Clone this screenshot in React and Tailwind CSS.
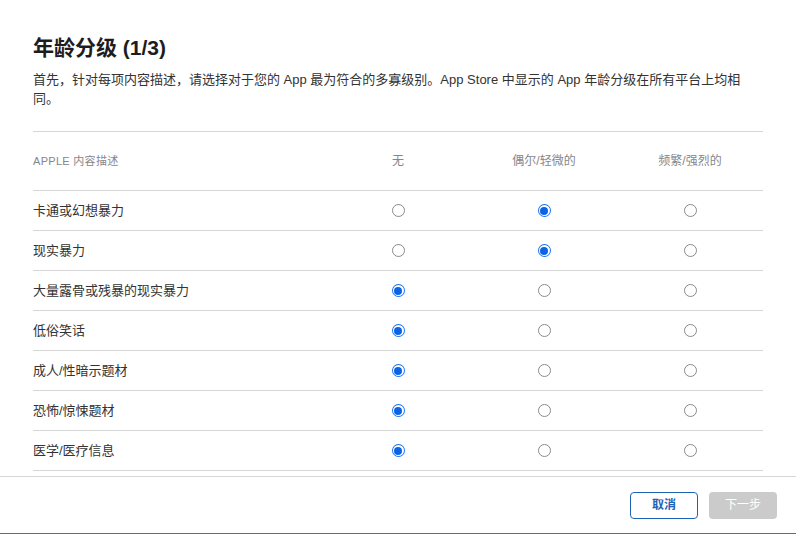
const font = { fontFamily: '"Liberation Sans", "Noto Sans CJK SC", sans-serif' }

const rows = [
  { label: '卡通或幻想暴力', value: 1 },
  { label: '现实暴力', value: 1 },
  { label: '大量露骨或残暴的现实暴力', value: 0 },
  { label: '低俗笑话', value: 0 },
  { label: '成人/性暗示题材', value: 0 },
  { label: '恐怖/惊悚题材', value: 0 },
  { label: '医学/医疗信息', value: 0 },
]

function Radio({ checked }) {
  if (checked) {
    return (
      <span className="flex h-[13px] w-[13px] items-center justify-center rounded-full bg-[#1a73f0]">
        <span className="flex h-[11px] w-[11px] items-center justify-center rounded-full bg-white">
          <span className="h-[8px] w-[8px] rounded-full bg-[#0d63e6]" />
        </span>
      </span>
    )
  }
  return <span className="h-[13px] w-[13px] rounded-full border border-[#8a8a8a] bg-white" />
}

export default function App() {
  return (
    <div className="flex h-[534px] w-[796px] flex-col overflow-hidden border-b border-[#6b6b6b] bg-white text-[#333]" style={font}>
      <div className="min-h-0 flex-1 overflow-hidden px-[33px] pt-[36px]">
        <h1 className="text-[21px] font-bold leading-[24px] text-[#1d1d1f]">年龄分级 (1/3)</h1>
        <p className="mt-[10px] text-[13px] leading-[19px] text-[#333]">
          首先，针对每项内容描述，请选择对于您的 App 最为符合的多寡级别。App Store 中显示的 App 年龄分级在所有平台上均相同。
        </p>
        <div className="mt-[23px] w-[730px] border-t border-[#d6d6d6]">
          <div className="grid h-[59px] grid-cols-[292px_146px_146px_146px] items-center border-b border-[#d6d6d6] text-[11px] text-[#86868b]">
            <span className="tracking-[0.3px]">APPLE 内容描述</span>
            <span className="text-center text-[12px]">无</span>
            <span className="text-center text-[12px]">偶尔/轻微的</span>
            <span className="text-center text-[12px]">频繁/强烈的</span>
          </div>
          {rows.map((row) => (
            <div key={row.label} className="grid h-[40px] grid-cols-[292px_146px_146px_146px] items-center border-b border-[#d6d6d6] text-[13px] text-[#333]">
              <span>{row.label}</span>
              {[0, 1, 2].map((i) => (
                <span key={i} className="flex justify-center">
                  <Radio checked={row.value === i} />
                </span>
              ))}
            </div>
          ))}
        </div>
      </div>
      <div className="flex h-[57px] shrink-0 items-center justify-end gap-[11px] border-t border-[#d6d6d6] pr-[19px]">
        <button className="h-[27px] w-[68px] rounded-[4px] border border-[#1f64b4] bg-white text-[12px] font-bold text-[#1f64b4]">取消</button>
        <button className="h-[27px] w-[68px] rounded-[4px] bg-[#cbcbcb] text-[12px] text-white">下一步</button>
      </div>
    </div>
  )
}
